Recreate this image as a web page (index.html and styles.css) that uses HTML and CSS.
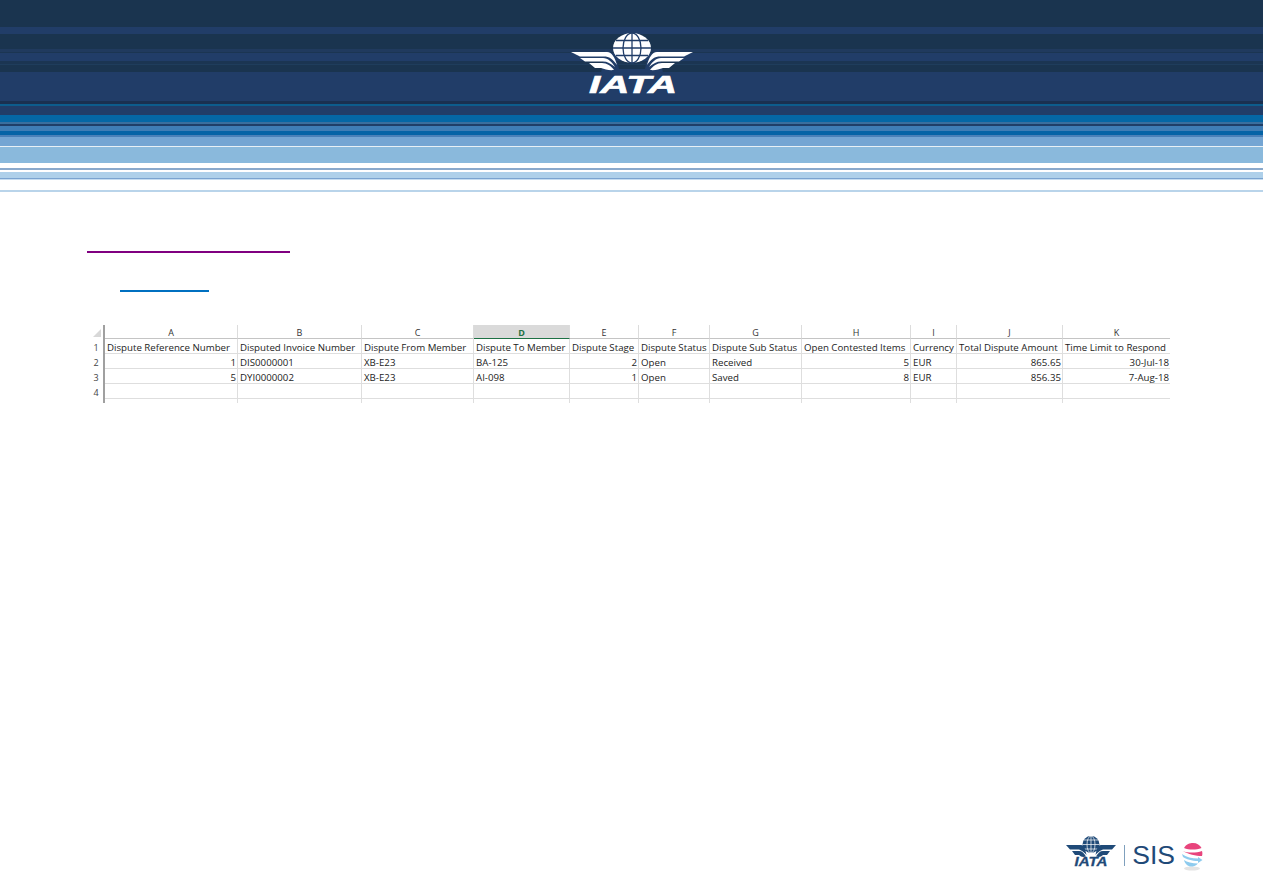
FILE: index.html
```html
<!DOCTYPE html>
<html lang="en">
<head>
<meta charset="utf-8">
<title>Dispute report</title>
<link rel="stylesheet" href="styles.css">
</head>
<body>
<header class="banner">
  <svg class="iata-logo" viewBox="0 0 122 66" width="122" height="66" aria-label="IATA">
    <ellipse class="globe" cx="61" cy="15" rx="19" ry="15"/>
    <g class="grid">
      <ellipse cx="61" cy="15" rx="9" ry="15"/>
      <path d="M61 0V30M42 15H80M45 7.500H77M45 22.500H77"/>
    </g>
    <path class="halo" d="M34 17C42 19 46 25 48 36H74C76 25 80 19 88 17L92 40H30Z"/>
    <path class="wing" d="M0 19H36C41 19 44 25 46 32C42 26 38 23.500 33 23.500H9Z"/>
    <path class="wing" d="M9 25H32C37 25 41 29 44 34C40 30.500 36 28.500 32 28.500H14Z"/>
    <path class="wing" d="M18 30H31C36 30 40 33 43 37C38 37.500 34 36.500 30 35H24Z"/>
    <path class="wing" d="M122 19H86C81 19 78 25 76 32C80 26 84 23.500 89 23.500H113Z"/>
    <path class="wing" d="M113 25H90C85 25 81 29 78 34C82 30.500 86 28.500 90 28.500H108Z"/>
    <path class="wing" d="M104 30H91C86 30 82 33 79 37C84 37.500 88 36.500 92 35H98Z"/>
    <text class="iata-word" x="62" y="60" text-anchor="middle" textLength="88" lengthAdjust="spacingAndGlyphs">IATA</text>
  </svg>
</header>
<main class="content">
  <div class="rule rule-purple"></div>
  <div class="rule rule-blue"></div>
  <div class="sheet">
    <div class="corner"><span class="corner-mark"></span></div>
    <div class="col">A</div><div class="col">B</div><div class="col">C</div><div class="col col-active">D</div><div class="col">E</div><div class="col">F</div><div class="col">G</div><div class="col">H</div><div class="col">I</div><div class="col">J</div><div class="col last">K</div>

    <div class="row-no">1</div>
    <div class="cell">Dispute Reference Number</div><div class="cell">Disputed Invoice Number</div><div class="cell">Dispute From Member</div><div class="cell">Dispute To Member</div><div class="cell">Dispute Stage</div><div class="cell">Dispute Status</div><div class="cell">Dispute Sub Status</div><div class="cell">Open Contested Items</div><div class="cell">Currency</div><div class="cell">Total Dispute Amount</div><div class="cell last">Time Limit to Respond</div>

    <div class="row-no">2</div>
    <div class="cell num">1</div><div class="cell">DIS0000001</div><div class="cell">XB-E23</div><div class="cell">BA-125</div><div class="cell num">2</div><div class="cell">Open</div><div class="cell">Received</div><div class="cell num">5</div><div class="cell">EUR</div><div class="cell num">865.65</div><div class="cell num last">30-Jul-18</div>

    <div class="row-no">3</div>
    <div class="cell num">5</div><div class="cell">DYI0000002</div><div class="cell">XB-E23</div><div class="cell">AI-098</div><div class="cell num">1</div><div class="cell">Open</div><div class="cell">Saved</div><div class="cell num">8</div><div class="cell">EUR</div><div class="cell num">856.35</div><div class="cell num last">7-Aug-18</div>

    <div class="row-no">4</div>
    <div class="cell"></div><div class="cell"></div><div class="cell"></div><div class="cell"></div><div class="cell"></div><div class="cell"></div><div class="cell"></div><div class="cell"></div><div class="cell"></div><div class="cell"></div><div class="cell last"></div>

    <div class="row-no stub"></div>
    <div class="cell stub"></div><div class="cell stub"></div><div class="cell stub"></div><div class="cell stub"></div><div class="cell stub"></div><div class="cell stub"></div><div class="cell stub"></div><div class="cell stub"></div><div class="cell stub"></div><div class="cell stub"></div><div class="cell stub last"></div>
  </div>
</main>
<footer class="foot">
  <svg class="foot-logo" viewBox="0 0 50 36" width="50" height="36" aria-label="IATA">
    <circle class="foot-globe" cx="25" cy="9.500" r="8.500"/>
    <g class="foot-grid">
      <ellipse cx="25" cy="9.500" rx="4" ry="8.500"/>
      <path d="M25 1V18M16.500 9.500H33.500M18 5H32M18 14H32"/>
    </g>
    <path class="foot-wing" d="M0 10H15C18 10 19 13 20.500 20C17 16 14 14.500 12 14.500H4Z"/>
    <path class="foot-wing" d="M6 16H13C16 16 18 18 20 21.500C17 22.500 15 22 13 20H9Z"/>
    <path class="foot-wing" d="M50 10H35C32 10 31 13 29.500 20C33 16 36 14.500 38 14.500H46Z"/>
    <path class="foot-wing" d="M44 16H37C34 16 32 18 30 21.500C33 22.500 35 22 37 20H41Z"/>
    <text class="foot-word" x="25" y="31" text-anchor="middle" textLength="33" lengthAdjust="spacingAndGlyphs">IATA</text>
  </svg>
  <span class="foot-divider"></span>
  <span class="sis">SIS</span>
  <svg class="sis-mark" viewBox="0 0 22 28" width="22" height="28" aria-hidden="true">
    <ellipse class="shadow" cx="11" cy="25.500" rx="8" ry="2"/>
    <path class="pink" d="M3 5C5 1 9 0 12 0C16 0 19 2 20.500 5C15 7 8 7 3 5Z"/>
    <path class="pink" d="M1.500 8C7 10 15 10 21 8C21.500 10 21.500 11 21 13C15 13 7 11 1.500 8Z"/>
    <path class="sky" d="M1 11C5 14 11 15.500 17 15.500V14L21.500 17L17 20V18C11 18 5 16 2 14Z"/>
    <path class="sky" d="M3 17C6 19 11 20.500 17 20.500C15 23 12 23.500 10 23.500C7 23.500 4 21 3 17Z"/>
  </svg>
</footer>
</body>
</html>
```
FILE: styles.css
```css
* { box-sizing: border-box; }
html, body { height: 100%; }
body {
  margin: 0;
  height: 893px;
  overflow: hidden;
  display: flex;
  flex-direction: column;
  background: #fff;
  font-family: "Open Sans", "Liberation Sans", sans-serif;
}
.banner {
  height: 192px;
  flex: none;
  display: flex;
  justify-content: center;
  align-items: flex-start;
  padding-top: 33px;
  background: linear-gradient(to bottom,
    #1a344f 0 27px, #213d68 27px 34px, #1a344f 34px 49px, #203a5e 49px 52px,
    #1b3552 52px 53px, #213d68 53px 61px, #1b3552 61px 64px, #1f3d5c 64px 65px,
    #1a344f 65px 72px, #213d68 72px 101px, #1a3050 101px 104px, #0d5c8c 104px 106px,
    #213d68 106px 115px, #0567a5 115px 122px, #3a6f9e 122px 124px, #1f3f68 124px 126px,
    #3f7db5 126px 131px, #0563a6 131px 135px, #4a80b8 135px 137px, #74a5d3 137px 146px,
    #e8f0f6 146px 147px, #8ab9dc 147px 163px, #fff 163px 168px, #8aa9cc 168px 170px,
    #fff 170px 172px, #aed0ea 172px 178px, #7aa3d0 178px 179px, #c5dcf0 179px 180px,
    #fff 180px 190px, #b9d4ea 190px 192px);
}
.iata-logo { display: block; }
.globe { fill: #fff; }
.grid { fill: none; stroke: #213d68; stroke-width: 1.3; }
.halo { fill: #213d68; }
.wing { fill: #fff; }
.iata-word {
  fill: #fff;
  font-family: "Liberation Sans", sans-serif;
  font-size: 24px;
  font-weight: 700;
  font-style: italic;
  stroke: #fff;
  stroke-width: .6;
}
.content {
  flex: 1;
  padding: 59px 93px 0 90px;
}
.rule { height: 2px; }
.rule-purple { width: 203px; margin-left: -3px; background: #800080; }
.rule-blue { width: 89px; margin: 37px 0 0 30px; background: #0070c0; }
.sheet {
  margin-top: 33px;
  display: grid;
  grid-template-columns: 15px 133px 124px 112px 96px 69px 71px 92px 109px 46px 106px 107px;
  grid-template-rows: 14px 15px 15px 15px 15px 4px;
  width: 1080px;
  font-size: 9.7px;
  color: #1c1c1c;
}
.corner {
  position: relative;
  border-right: 2px solid #a0a0a0;
}
.corner-mark {
  position: absolute;
  right: 2px;
  bottom: 2px;
  border-style: solid;
  border-width: 0 0 8px 8px;
  border-color: transparent transparent #d8d8d8 transparent;
}
.col {
  text-align: center;
  color: #333;
  font-size: 9px;
  line-height: 14px;
  padding-top: 1px;
  border-right: 1px solid #dcdcdc;
  border-bottom: 1px solid #c4c4c4;
}
.col-active {
  background: #dadada;
  color: #1e7145;
  font-weight: 700;
  border-bottom: 1px solid #1e7145;
}
.row-no {
  text-align: center;
  color: #444;
  font-size: 9px;
  line-height: 12px;
  padding: 3px 1px 0 0;
  border-right: 2px solid #a0a0a0;
}
.cell {
  padding: 3px 1px 0 2px;
  line-height: 12px;
  border-right: 1px solid #dedede;
  border-bottom: 1px solid #dedede;
  white-space: nowrap;
}
.num { text-align: right; }
.stub { border-bottom: 0; padding: 0; }
.last { border-right: 0; }
.foot {
  flex: none;
  height: 63px;
  padding: 5px 60px 0 0;
  display: flex;
  justify-content: flex-end;
  align-items: flex-start;
}
.foot-logo { display: block; margin-right: 8px; }
.foot-globe { fill: #1f4a78; }
.foot-grid { fill: none; stroke: #fff; stroke-width: .7; }
.foot-wing { fill: #1f4a78; }
.foot-word {
  fill: #1f4a78;
  font-family: "Liberation Sans", sans-serif;
  font-size: 13px;
  font-weight: 700;
  font-style: italic;
  stroke: #1f4a78;
  stroke-width: .3;
}
.foot-divider {
  width: 1px;
  height: 21px;
  margin: 10px 7px 0 0;
  background: #7fa0bd;
}
.sis {
  font-family: "Liberation Sans", sans-serif;
  font-size: 26.500px;
  line-height: 28px;
  color: #1f4a78;
  margin: 6px 6px 0 0;
}
.sis-mark { display: block; margin-top: 8px; }
.shadow { fill: #e4e4e4; }
.pink { fill: #e8447c; }
.sky { fill: #8ecbee; }
```
